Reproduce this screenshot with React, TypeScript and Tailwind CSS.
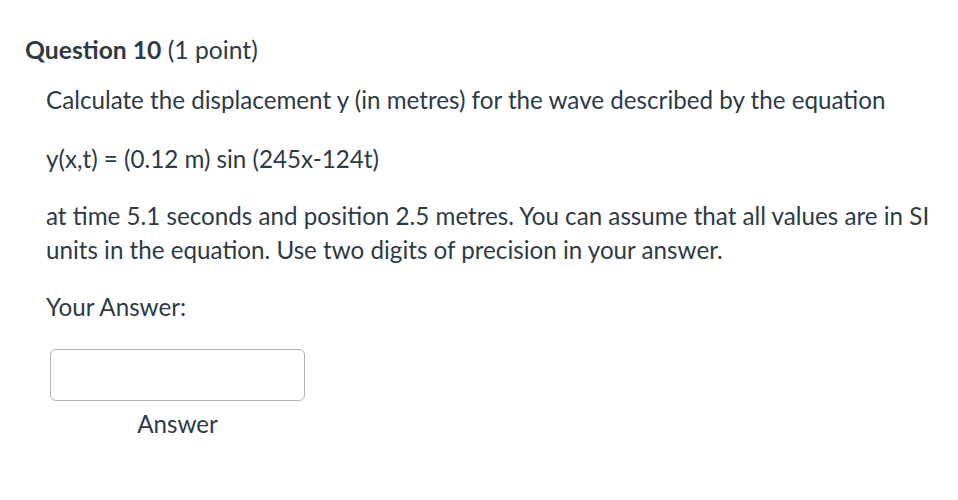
import React from "react";

const font = { fontFamily: "Lato, 'Open Sans', sans-serif" };

export default function App() {
  return (
    <div className="w-[958px] h-[500px] bg-white text-[#2d3b45] overflow-hidden" style={font}>
      <div className="pt-[36px] pl-[25px]">
        <h2 className="text-[24.7px] leading-[28px]">
          <span className="font-bold">Question 10</span> (1 point)
        </h2>
        <div className="pl-[21px] pt-[19px] text-[24.2px] leading-[34px] w-[920px]">
          <p>Calculate the displacement y (in metres) for the wave described by the equation</p>
          <p className="mt-[25px]">y(x,t) = (0.12 m) sin (245x-124t)</p>
          <p className="mt-[23px] pr-[10px]">
            at time 5.1 seconds and position 2.5 metres. You can assume that all values are in SI units in the equation. Use two digits of precision in your answer.
          </p>
          <p className="mt-[23px]">Your Answer:</p>
          <div className="mt-[25px] ml-[4px] w-[255px] flex flex-col items-center">
            <input
              type="text"
              aria-label="Answer"
              className="w-[255px] h-[52px] border border-[#b3b3b3] rounded-[6px] bg-white outline-none"
            />
            <label className="mt-[6px] leading-[34px]">Answer</label>
          </div>
        </div>
      </div>
    </div>
  );
}
